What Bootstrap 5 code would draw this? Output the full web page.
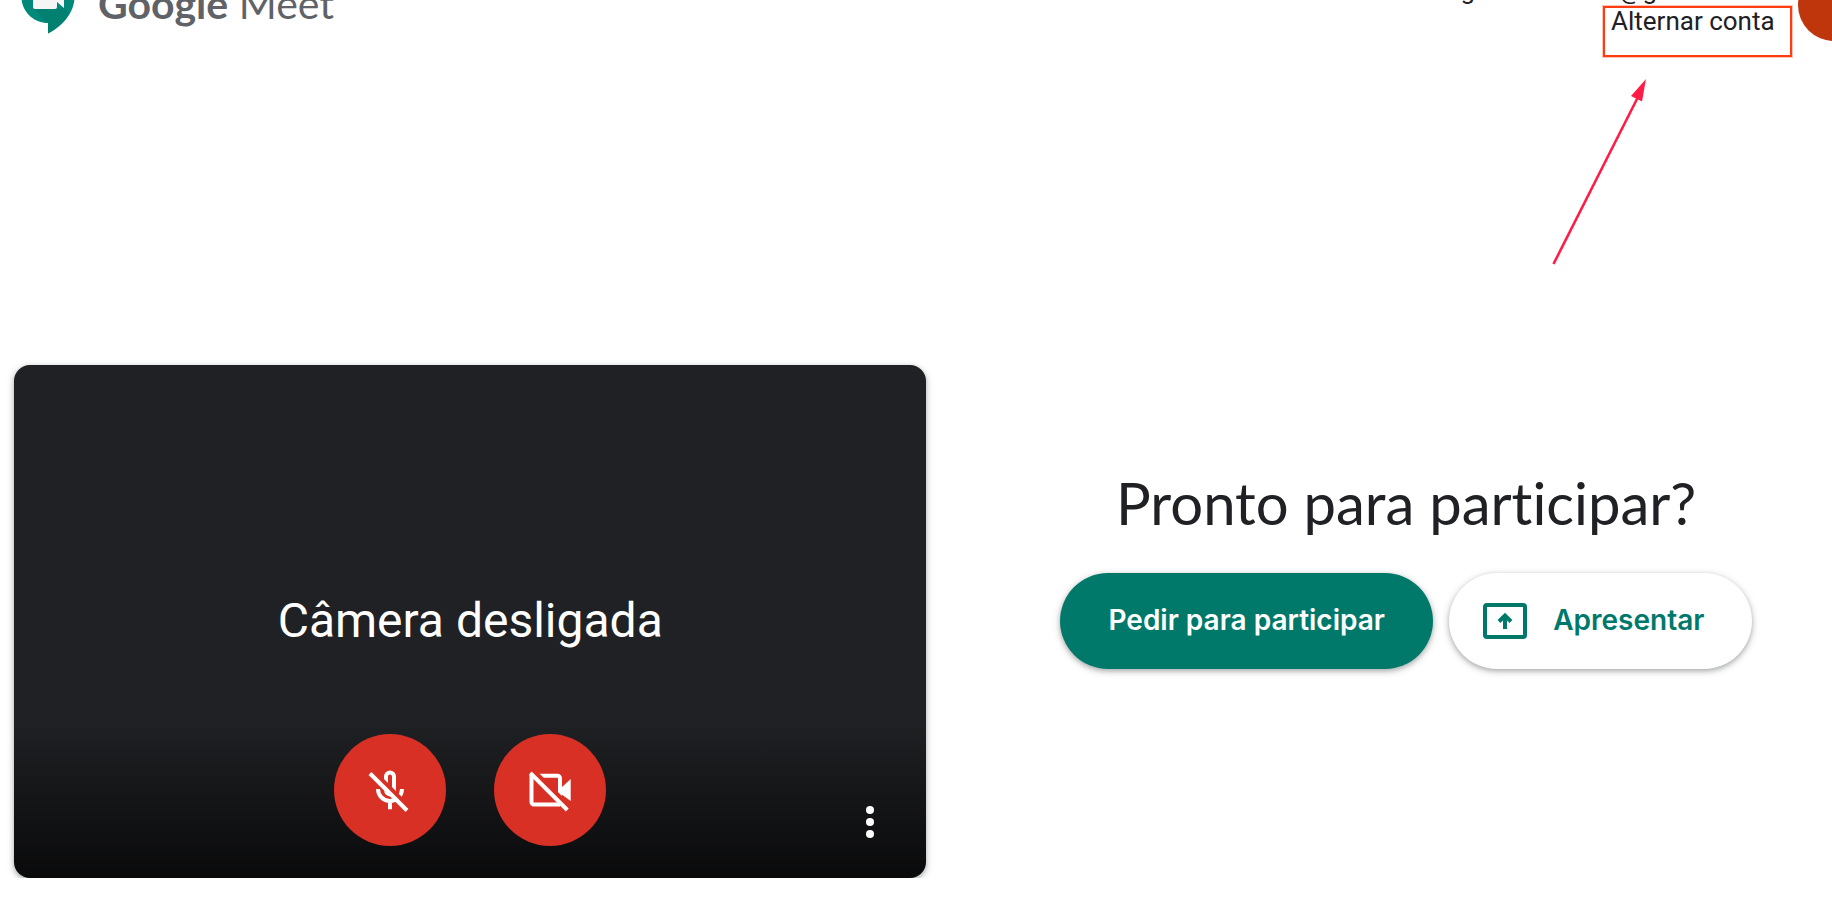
<!DOCTYPE html>
<html lang="pt-BR">
<head>
<meta charset="utf-8">
<meta name="viewport" content="width=device-width, initial-scale=1">
<title>Google Meet</title>
<link rel="stylesheet" href="https://cdn.jsdelivr.net/npm/bootstrap@5.3.0/dist/css/bootstrap.min.css">
<style>
  body { font-family: Roboto, "Liberation Sans", sans-serif; color: #202124; background: #fff; }
  .top-bar { height: 62px; padding-left: 20px; margin-bottom: 303px; }
  .brand-link { color: #5f6368; font-family: Lato, sans-serif; font-size: 41px; line-height: 48px; gap: 22px; height: 34px; }
  .brand-link svg { width: 56px; height: 64px; }
  .brand-name { padding-bottom: 6px; }
  .account { font-size: 26px; line-height: 32px; height: 57px; margin-right: -38px; }
  .account-mail { gap: 144px; padding-right: 141px; }
  .account-switch { width: 189px; height: 51px; border: 2px solid #ff3c0f; box-shadow: 0 0 0 1px rgba(255,60,15,.3); padding: 0 0 0 6px; color: #202124; line-height: 26px; margin-right: 6px; }
  .avatar { width: 72px; height: 72px; background: #bf360c; margin-bottom: 16px; }
  .pointer { right: 180px; top: 74px; width: 104px; height: 196px; }
  .lobby { display: grid; grid-template-columns: 15fr 14fr; column-gap: 54px; padding-left: 14px; }
  .preview { aspect-ratio: 16 / 9; display: grid; grid-template-rows: 1fr auto 1fr; border-radius: 16px; color: #fff; font-size: 48px; line-height: 62px;
    background: linear-gradient(to top, rgba(0,0,0,.7), transparent 160px) #202124;
    box-shadow: 0 2px 4px rgba(60,64,67,.3), 0 2px 6px 2px rgba(60,64,67,.15); }
  .preview-text { grid-row: 2; padding-bottom: 2px; }
  .preview-bar { grid-row: 3; display: grid; grid-template-columns: 1fr auto 1fr; padding: 0 32px 32px; }
  .preview-toggles { grid-column: 2; }
  .preview-more { grid-column: 3; }
  .round-btn { width: 112px; height: 112px; background: #d93025; }
  .preview svg, .present svg { width: 48px; height: 48px; display: block; }
  .join { padding-top: 102px; }
  .join-title { font-family: Lato, sans-serif; font-size: 58px; line-height: 72px; margin-bottom: 34px; color: #202124; font-variant-ligatures: none; }
  .pill { height: 96px; border: 0; border-radius: 48px; font-family: Inter, sans-serif; font-weight: 600; font-size: 28px; padding: 0 44px 2px; white-space: nowrap;
    box-shadow: 0 2px 4px rgba(60,64,67,.3), 0 2px 6px 2px rgba(60,64,67,.15); }
  .ask { background: #00796b; color: #fff; width: 373px; }
  .present { background: #fff; color: #00796b; padding: 0 0 0 32px; gap: 24px; width: 303px; }
  .present span { padding-bottom: 2px; }
</style>
<script src="https://cdn.jsdelivr.net/npm/bootstrap@5.3.0/dist/js/bootstrap.bundle.min.js"></script>
</head>
<body class="position-relative overflow-x-hidden">
<header class="top-bar d-flex justify-content-between align-items-start overflow-hidden">
  <a href="#" class="brand-link d-flex align-items-end text-decoration-none">
    <svg viewBox="0 0 56 64" aria-hidden="true">
      <path fill="#00897b" d="M28 1C13.600 1 1.500 12.500 1.500 27S13.500 53 28 53v10.500C41 57 54.500 43.500 54.500 27S42.400 1 28 1z"/>
      <path fill="#00796b" d="M14 39l14 14v10.500C36 59.500 44 53 49 44l-5-6-7 1z" opacity=".6"/>
      <path fill="#f5f5f5" d="M15 14h20a2 2 0 0 1 2 2v7l7-6v21l-7-6v5a2 2 0 0 1-2 2H15a2 2 0 0 1-2-2V16a2 2 0 0 1 2-2z"/>
    </svg>
    <span class="brand-name d-block"><b>Google</b> Meet</span>
  </a>
  <div class="account d-flex align-items-end">
    <div class="d-flex flex-column align-items-end">
      <div class="account-mail d-flex"><span>g</span><span>@g</span></div>
      <button type="button" class="account-switch d-flex align-items-start bg-transparent">Alternar conta</button>
    </div>
    <div class="avatar rounded-circle flex-shrink-0"></div>
  </div>
</header>
<svg class="pointer position-absolute" viewBox="0 0 104 196" aria-hidden="true">
  <path d="M5.500 190L90 23" stroke="#ff1d48" stroke-width="2.600"/>
  <path d="M98 5L83 22l11 5.500z" fill="#ff1d48"/>
</svg>
<main class="lobby">
  <section class="preview text-center">
    <div class="preview-text">Câmera desligada</div>
    <div class="preview-bar align-items-end">
      <div class="preview-toggles d-flex gap-5">
        <button type="button" class="round-btn btn rounded-circle d-flex align-items-center justify-content-center" aria-label="Ativar microfone">
          <svg viewBox="0 0 48 48" fill="none" stroke="#fff" stroke-width="4">
            <path d="M20 25V10.500a4 4 0 0 1 8 0V23a4 4 0 0 1-8 2M12 23a12 12 0 0 0 24 0M24 34v9.300"/>
            <path d="M6.500 4.500L43 41" stroke="#d93025"/>
            <path d="M4 7.500L41 44.500"/>
          </svg>
        </button>
        <button type="button" class="round-btn btn rounded-circle d-flex align-items-center justify-content-center" aria-label="Ativar câmera">
          <svg viewBox="0 0 48 48" fill="none" stroke="#fff" stroke-width="4">
            <path d="M5.500 9v27a2.500 2.500 0 0 0 2.500 2.500H34M11 9.700h20.500a2.500 2.500 0 0 1 2.500 2.500V32"/>
            <path d="M35 22l9.700-9v22L35 28z" fill="#fff" stroke="none"/>
            <path d="M7 4L44 41" stroke="#d93025"/>
            <path d="M4.300 7L41.300 44"/>
          </svg>
        </button>
      </div>
      <button type="button" class="preview-more btn p-0 border-0 ms-auto" aria-label="Mais opções">
        <svg viewBox="0 0 48 48" fill="#fff"><circle cx="24" cy="12" r="4"/><circle cx="24" cy="24" r="4"/><circle cx="24" cy="36" r="4"/></svg>
      </button>
    </div>
  </section>
  <section class="join text-center">
    <h1 class="join-title fw-normal">Pronto para participar?</h1>
    <div class="d-flex justify-content-center gap-3">
      <button type="button" class="pill ask">Pedir para participar</button>
      <button type="button" class="pill present d-flex align-items-center">
        <svg viewBox="0 0 48 48" fill="none" stroke="#00796b" stroke-width="4" aria-hidden="true">
          <rect x="4" y="8" width="40" height="32" rx="2"/>
          <path d="M24 32V19M18 24.500l6-6 6 6"/>
        </svg>
        <span>Apresentar</span>
      </button>
    </div>
  </section>
</main>
</body>
</html>
